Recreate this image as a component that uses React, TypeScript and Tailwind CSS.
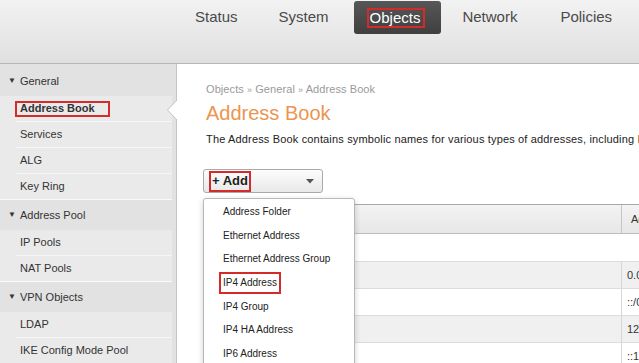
import React from "react";

const navItems = [
  { n: "Status", cls: "" },
  { n: "System", cls: "" },
  { n: "Objects", cls: "" },
  { n: "Network", cls: "-ml-[4px]" },
  { n: "Policies", cls: "ml-[2px]" },
];

function SideHeader({ label }: { label: string }) {
  return (
    <div className="h-[30px] flex items-center pl-[8px] text-[11px] text-[#333]">
      <span className="text-[8px] mr-[4px] text-[#333]">▼</span>
      <span>{label}</span>
    </div>
  );
}

function SideGroup({ items }: { items: { label: string; active?: boolean }[] }) {
  return (
    <div className="bg-[#eaeaea] border-b border-[#fafafa]">
      {items.map((it, i) => (
        <div key={it.label} className="pl-[16px]">
          <div
            className={
              "flex items-center text-[11px] text-[#333] " +
              (i < items.length - 1 ? "h-[26px] border-b border-[#f6f6f6]" : "h-[25px]")
            }
          >
            {it.active ? (
              <span className="h-[16px] flex items-center border-2 border-[#d62b2b] pl-[3px] pr-[13px] -ml-[1px] font-bold">
                {it.label}
              </span>
            ) : (
              <span className="pl-[4px]">{it.label}</span>
            )}
          </div>
        </div>
      ))}
    </div>
  );
}

const menuItems = [
  "Address Folder",
  "Ethernet Address",
  "Ethernet Address Group",
  "IP4 Address",
  "IP4 Group",
  "IP4 HA Address",
  "IP6 Address",
  "IP6 Group",
];

const rows = [
  { v: "", cls: "bg-white" },
  { v: "0.0.0.0/0", cls: "bg-[#f0f0f0] border-t border-[#dcdcdc]" },
  { v: "::/0", cls: "bg-white border-t border-[#dcdcdc]" },
  { v: "127.0.0.1", cls: "bg-[#f0f0f0] border-t border-[#dcdcdc]" },
  { v: "::1", cls: "bg-white border-t border-[#dcdcdc]" },
];

export default function App() {
  return (
    <div
      className="w-[639px] h-[363px] overflow-hidden bg-white flex flex-col"
      style={{ fontFamily: '"Liberation Sans", Arial, sans-serif' }}
    >
      {/* Header */}
      <div className="h-[64px] shrink-0 border-b border-[#b5b5b5] bg-gradient-to-b from-[#f2f2f2] to-[#e0e0e0] flex items-start pl-[179px] pt-[1px] gap-[9px]">
        {navItems.map(({ n, cls }) =>
          n === "Objects" ? (
            <div
              key={n}
              className="h-[33px] pl-[13px] pr-[16px] flex items-center rounded-[3px] bg-gradient-to-b from-[#575757] to-[#3f3f3f] text-white text-[15px]"
            >
              <span className="border-2 border-[#d42a2a] pl-[1px] pr-[3px] leading-[16px]">{n}</span>
            </div>
          ) : (
            <div key={n} className={"h-[33px] px-[16px] flex items-center text-[15px] text-[#4a4a4a] " + cls}>
              {n}
            </div>
          )
        )}
      </div>

      {/* Body */}
      <div className="flex flex-1 min-h-0">
        {/* Sidebar */}
        <div className="w-[177px] shrink-0 bg-[#e2e2e2] border-r border-[#c6c6c6] pr-[4px] pt-[2px]">
          <SideHeader label="General" />
          <SideGroup
            items={[
              { label: "Address Book", active: true },
              { label: "Services" },
              { label: "ALG" },
              { label: "Key Ring" },
            ]}
          />
          <SideHeader label="Address Pool" />
          <SideGroup items={[{ label: "IP Pools" }, { label: "NAT Pools" }]} />
          <SideHeader label="VPN Objects" />
          <SideGroup items={[{ label: "LDAP" }, { label: "IKE Config Mode Pool" }]} />
        </div>

        {/* Main */}
        <div className="flex-1 min-w-0 relative pl-[29px] pt-[18px]">
          <svg
            className="absolute left-[-11px] top-[36px]"
            width="12"
            height="20"
            viewBox="0 0 12 20"
          >
            <path d="M12 0 L11 0 L1.5 10 L11 20 L12 20 Z" fill="#ffffff" />
            <path d="M11 0 L1.5 10 L11 20" stroke="#c2c2c2" strokeWidth="1" fill="none" />
          </svg>

          <div className="text-[11px] leading-[14px] text-[#9a9a9a] tracking-[0.08px]">
            Objects <span className="text-[9px]">»</span> General <span className="text-[9px]">»</span> Address Book
          </div>
          <div className="mt-[4px] text-[20px] leading-[24px] text-[#ec9551]">Address Book</div>
          <div className="mt-[7px] text-[11px] leading-[14px] text-[#222] whitespace-nowrap tracking-[0.16px]">
            The Address Book contains symbolic names for various types of addresses, including IPv4 and IPv6 addresses.
          </div>

          <div className="relative mt-[23px] -ml-[3px] w-[120px]">
            <div className="h-[24px] w-[120px] rounded-[3px] border border-[#a9a9a9] bg-gradient-to-b from-[#fdfdfd] to-[#e8e8e8] flex items-center pl-[5px] pr-[8px]">
              <span className="h-[21px] flex items-center border-2 border-[#d42a2a] pl-[1px] pr-[1px] text-[13px] font-bold text-[#222]">
                + Add
              </span>
              <span className="flex-1" />
              <svg width="8" height="5" viewBox="0 0 8 5">
                <path d="M0 0 L8 0 L4 4.5 Z" fill="#555" />
              </svg>
            </div>

            {/* Dropdown menu */}
            <div className="absolute left-0 top-[29px] w-[152px] h-[200px] z-10 bg-white border border-[#b8b8b8] rounded-t-[3px] shadow-[0_2px_6px_rgba(0,0,0,0.18)] pt-[1px]">
              {menuItems.map((m) => (
                <div key={m} className="h-[23.6px] flex items-center pl-[19px] text-[10px] text-[#222] whitespace-nowrap">
                  {m === "IP4 Address" ? (
                    <span className="-ml-[4px] border-2 border-[#d42a2a] px-[2px] h-[22px] flex items-center">{m}</span>
                  ) : (
                    m
                  )}
                </div>
              ))}
            </div>
          </div>

          {/* Table */}
          <div className="mt-[11px] -ml-[3px] w-[520px]">
            <div className="h-[30px] border-t border-b border-t-[#a8a8a8] border-b-[#bdbdbd] bg-gradient-to-b from-[#f3f3f3] to-[#e7e7e7] flex">
              <div className="w-[419px] shrink-0 border-r border-[#c6c6c6]" />
              <div className="flex items-center pl-[9px] text-[11px] text-[#333]">Address</div>
            </div>
            {rows.map((r, i) => (
              <div key={i} className={"h-[27px] flex " + r.cls}>
                <div className={"w-[419px] shrink-0 " + (i > 0 ? "border-r border-[#d6d6d6]" : "")} />
                <div className="flex items-center pl-[5px] text-[11px] text-[#333] whitespace-nowrap">{r.v}</div>
              </div>
            ))}
          </div>
        </div>
      </div>
    </div>
  );
}
